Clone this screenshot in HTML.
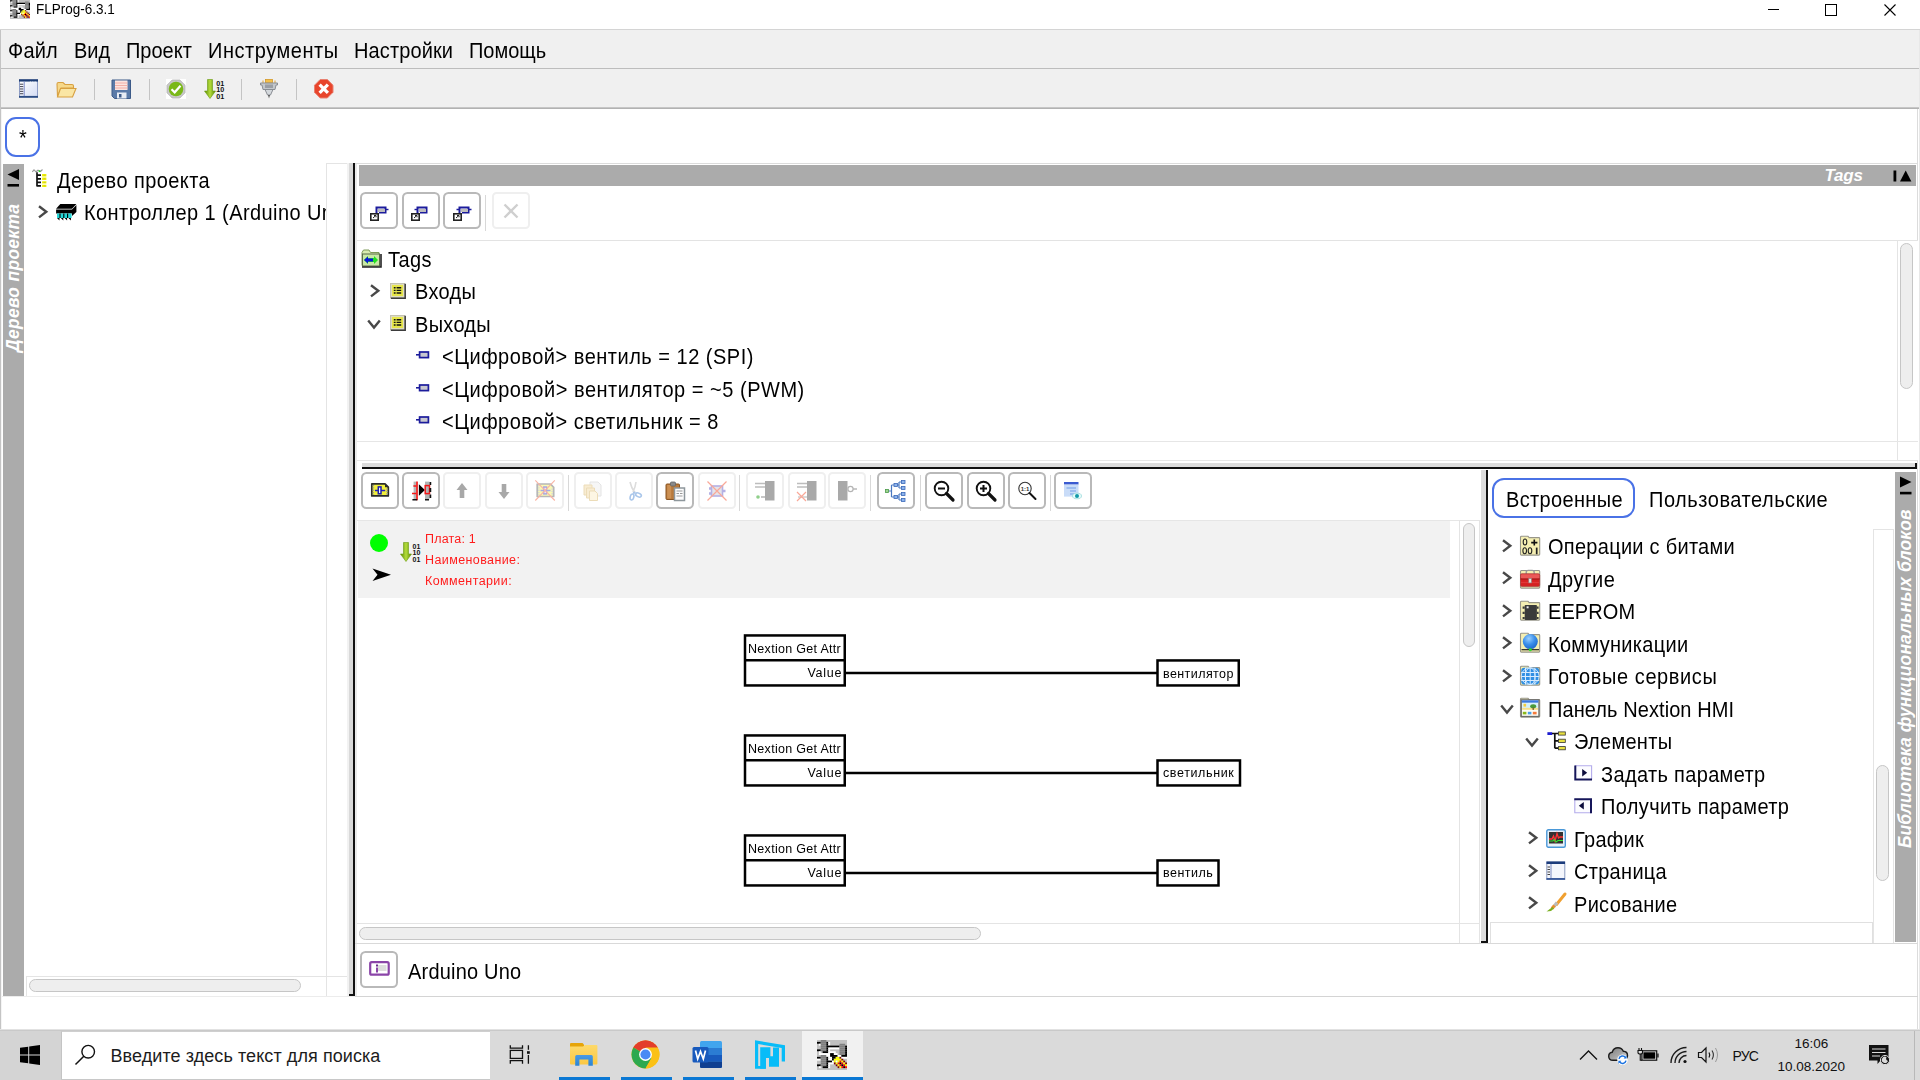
<!DOCTYPE html>
<html><head><meta charset="utf-8"><title>FLProg-6.3.1</title>
<style>
*{box-sizing:border-box;margin:0;padding:0}
html,body{width:1920px;height:1080px;overflow:hidden;background:#fff}
body{font-family:"Liberation Sans",sans-serif;color:#000;position:relative}
.a{position:absolute}
.t{position:absolute;white-space:pre;line-height:1}
.t20{font-size:21.8px;transform-origin:0 0;transform:scaleX(.9174)}
.hl{position:absolute;height:1px}
.vl{position:absolute;width:1px}
.btn{position:absolute;width:38px;height:37px;border:2px solid #b9b9b9;border-radius:5.500px;background:#fff}
.btn.dis{border-color:#efefef;border-radius:4.500px}
.sep{position:absolute;width:1px;height:36px;background:#d8d8d8}
.thumb{position:absolute;background:#eeeeee;border:1px solid #c6c6c6;border-radius:7px}
.chev{position:absolute;width:12px;height:14px}
svg{position:absolute;overflow:visible}
</style></head><body>

<!-- ============ TITLE BAR ============ -->
<div class="a" id="titlebar" style="left:0;top:0;width:1920px;height:30px;background:#fff"></div>
<div class="t" style="left:35.500px;top:2.400px;font-size:14.500px;transform-origin:0 0;transform:scaleX(.932)">FLProg-6.3.1</div>
<svg style="left:10px;top:-1.500px;filter:blur(.35px)" width="20" height="20" viewBox="0 0 16 16"><rect width="16" height="16" fill="#c0c0c0"/><rect x="2" y="0" width="3" height="1" fill="#808080"/><rect x="0" y="1" width="2" height="1" fill="#000"/><rect x="2" y="1" width="3" height="1" fill="#808080"/><rect x="5" y="1" width="1" height="1" fill="#000"/><rect x="6" y="1" width="1" height="1" fill="#fff"/><rect x="1" y="2" width="1" height="1" fill="#fff"/><rect x="2" y="2" width="3" height="1" fill="#808080"/><rect x="5" y="2" width="1" height="1" fill="#000"/><rect x="6" y="2" width="1" height="1" fill="#fff"/><rect x="12" y="2" width="3" height="1" fill="#808080"/><rect x="2" y="3" width="3" height="1" fill="#808080"/><rect x="5" y="3" width="7" height="1" fill="#000"/><rect x="12" y="3" width="3" height="1" fill="#808080"/><rect x="15" y="3" width="1" height="1" fill="#000"/><rect x="2" y="4" width="3" height="1" fill="#808080"/><rect x="5" y="4" width="1" height="1" fill="#000"/><rect x="6" y="4" width="6" height="1" fill="#fff"/><rect x="12" y="4" width="3" height="1" fill="#808080"/><rect x="15" y="4" width="1" height="1" fill="#000"/><rect x="0" y="5" width="2" height="1" fill="#000"/><rect x="2" y="5" width="3" height="1" fill="#808080"/><rect x="5" y="5" width="1" height="1" fill="#000"/><rect x="6" y="5" width="1" height="1" fill="#fff"/><rect x="12" y="5" width="3" height="1" fill="#808080"/><rect x="15" y="5" width="1" height="1" fill="#000"/><rect x="1" y="6" width="1" height="1" fill="#fff"/><rect x="3" y="6" width="3" height="1" fill="#000"/><rect x="6" y="6" width="4" height="1" fill="#fff"/><rect x="12" y="6" width="3" height="1" fill="#808080"/><rect x="15" y="6" width="1" height="1" fill="#000"/><rect x="1" y="7" width="6" height="1" fill="#fff"/><rect x="7" y="7" width="2" height="1" fill="#000"/><rect x="9" y="7" width="2" height="1" fill="#fff"/><rect x="12" y="7" width="3" height="1" fill="#808080"/><rect x="15" y="7" width="1" height="1" fill="#000"/><rect x="2" y="8" width="3" height="1" fill="#808080"/><rect x="5" y="8" width="2" height="1" fill="#fff"/><rect x="7" y="8" width="4" height="1" fill="#000"/><rect x="11" y="8" width="2" height="1" fill="#fff"/><rect x="13" y="8" width="3" height="1" fill="#000"/><rect x="0" y="9" width="2" height="1" fill="#000"/><rect x="2" y="9" width="3" height="1" fill="#808080"/><rect x="5" y="9" width="1" height="1" fill="#000"/><rect x="6" y="9" width="2" height="1" fill="#fff"/><rect x="8" y="9" width="2" height="1" fill="#000"/><rect x="10" y="9" width="2" height="1" fill="#ff0"/><rect x="12" y="9" width="1" height="1" fill="#800000"/><rect x="13" y="9" width="3" height="1" fill="#fff"/><rect x="0" y="10" width="2" height="1" fill="#fff"/><rect x="2" y="10" width="3" height="1" fill="#808080"/><rect x="5" y="10" width="1" height="1" fill="#000"/><rect x="6" y="10" width="2" height="1" fill="#fff"/><rect x="8" y="10" width="1" height="1" fill="#000"/><rect x="9" y="10" width="4" height="1" fill="#ff0"/><rect x="13" y="10" width="1" height="1" fill="#800000"/><rect x="2" y="11" width="3" height="1" fill="#808080"/><rect x="5" y="11" width="3" height="1" fill="#000"/><rect x="8" y="11" width="1" height="1" fill="#fff"/><rect x="9" y="11" width="1" height="1" fill="#ff0"/><rect x="10" y="11" width="1" height="1" fill="#fff"/><rect x="11" y="11" width="1" height="1" fill="#ff0"/><rect x="12" y="11" width="1" height="1" fill="#f00"/><rect x="13" y="11" width="1" height="1" fill="#ff0"/><rect x="14" y="11" width="1" height="1" fill="#800000"/><rect x="2" y="12" width="3" height="1" fill="#808080"/><rect x="5" y="12" width="1" height="1" fill="#000"/><rect x="6" y="12" width="3" height="1" fill="#fff"/><rect x="9" y="12" width="1" height="1" fill="#800000"/><rect x="10" y="12" width="1" height="1" fill="#ff0"/><rect x="11" y="12" width="1" height="1" fill="#f00"/><rect x="12" y="12" width="1" height="1" fill="#000"/><rect x="13" y="12" width="1" height="1" fill="#f00"/><rect x="14" y="12" width="1" height="1" fill="#ff0"/><rect x="15" y="12" width="1" height="1" fill="#800000"/><rect x="0" y="13" width="2" height="1" fill="#000"/><rect x="2" y="13" width="3" height="1" fill="#808080"/><rect x="5" y="13" width="1" height="1" fill="#000"/><rect x="6" y="13" width="1" height="1" fill="#fff"/><rect x="10" y="13" width="1" height="1" fill="#800000"/><rect x="11" y="13" width="1" height="1" fill="#ff0"/><rect x="12" y="13" width="1" height="1" fill="#f00"/><rect x="13" y="13" width="1" height="1" fill="#000"/><rect x="14" y="13" width="1" height="1" fill="#f00"/><rect x="15" y="13" width="1" height="1" fill="#ff0"/><rect x="1" y="14" width="1" height="1" fill="#fff"/><rect x="3" y="14" width="3" height="1" fill="#000"/><rect x="6" y="14" width="1" height="1" fill="#fff"/><rect x="11" y="14" width="1" height="1" fill="#800000"/><rect x="12" y="14" width="1" height="1" fill="#ff0"/><rect x="13" y="14" width="1" height="1" fill="#f00"/><rect x="14" y="14" width="1" height="1" fill="#000"/><rect x="15" y="14" width="1" height="1" fill="#f00"/></svg>
<!-- window controls -->
<svg style="left:1760px;top:0" width="160" height="30" viewBox="0 0 160 30">
 <path d="M8 9.5H19" stroke="#000" stroke-width="1" fill="none"/>
 <rect x="65.5" y="4.5" width="11" height="11" stroke="#000" stroke-width="1" fill="none"/>
 <path d="M124.5 4.5L135.5 15.5M135.5 4.5L124.5 15.5" stroke="#000" stroke-width="1.1" fill="none"/>
</svg>

<!-- ============ MENU BAR ============ -->
<div class="a" style="left:0;top:29px;width:1920px;height:80px;background:#f0f0f0"></div>
<div class="hl" style="left:0;top:29px;width:1920px;background:#d4d4d4"></div>
<div class="hl" style="left:0;top:68px;width:1920px;background:#bdbdbd"></div>
<div class="hl" style="left:0;top:107px;width:1920px;background:#c6c6c6"></div>
<div class="hl" style="left:0;top:108px;width:1920px;background:#b2b2b2"></div>
<div class="t t20" style="left:8px;top:39.55px;letter-spacing:0.218px">Файл</div>
<div class="t t20" style="left:74px;top:39.55px">Вид</div>
<div class="t t20" style="left:126px;top:39.55px">Проект</div>
<div class="t t20" style="left:207.5px;top:39.55px;letter-spacing:0.599px">Инструменты</div>
<div class="t t20" style="left:354px;top:39.55px;letter-spacing:0.131px">Настройки</div>
<div class="t t20" style="left:469px;top:39.55px">Помощь</div>

<!-- ============ TOOLBAR ============ -->
<div id="toolbar">
<svg style="left:18.700px;top:79px" width="19" height="19" viewBox="0 0 20 20"><defs><linearGradient id="gp" x1="0" y1="0" x2="1" y2="1"><stop offset="0" stop-color="#fff"/><stop offset="1" stop-color="#d4dcf4"/></linearGradient></defs><rect x="0.500" y="1" width="19" height="18" fill="url(#gp)" stroke="#8a9ac4" stroke-width="1"/><rect x="0" y="0.300" width="20" height="2.400" fill="#1c3c74"/><rect x="0" y="17.800" width="20" height="1.900" fill="#2c4c84"/><path d="M5.500 2.500V18" stroke="#7a88c8" stroke-width="1"/><path d="M1 5.500H4.500M1 8H4.500M1 10.500H4.500M1 13H4.500M1 15.500H4.500" stroke="#3a3a4a" stroke-width="1"/><path d="M12 2.700V3.700M14.500 2.700V3.700M17 2.700V3.700" stroke="#fff" stroke-width="1"/></svg><svg style="left:56px;top:80px" width="21" height="19" viewBox="0 0 21 19"><path d="M1 4Q1 2.500 2.500 2.500H7L9 4.500H16Q17.500 4.500 17.500 6V8H5L1.500 16.500Z" fill="#f6d88a" stroke="#d8a040" stroke-width="1.100"/><path d="M1.500 17L4.500 8.500H20L16.500 17Z" fill="#fae6a4" stroke="#d8a040" stroke-width="1.100"/></svg><div class="sep" style="left:94px;top:79px;height:21px;background:#c4c4c4"></div><svg style="left:111px;top:78.5px" width="20" height="20" viewBox="0 0 20 20"><path d="M1 1H19.500V19.500H3.500L1 17Z" fill="#5a7aa8" stroke="#3c5a88" stroke-width="1"/><rect x="4" y="1.500" width="12.500" height="9.500" fill="#fbe4e0"/><path d="M4 4H16.500M4 6.500H16.500M4 9H16.500" stroke="#f0a8a0" stroke-width=".9"/><rect x="6" y="13.500" width="9.500" height="6" fill="#e8ecf4"/><rect x="8" y="15" width="2.500" height="3.500" fill="#3c5a88"/></svg><div class="sep" style="left:149px;top:79px;height:21px;background:#c4c4c4"></div><svg style="left:166px;top:78.5px" width="20" height="20" viewBox="0 0 20 20"><rect x="0" y="0" width="20" height="20" fill="#fff"/><path d="M6.200 1H13.800L19 6.200V13.800L13.800 19H6.200L1 13.800V6.200Z" fill="#c8c8c8" stroke="#b0b0b0" stroke-width=".8"/><circle cx="10" cy="10" r="7.300" fill="#7ab818"/><path d="M5.500 10.200L8.700 13.300L14.500 6.800" fill="none" stroke="#fff" stroke-width="2.200"/></svg><svg style="left:203.5px;top:78.5px" width="21" height="20" viewBox="0 0 21 20"><defs><linearGradient id="gb" x1="0" x2="1" y1="0" y2="0"><stop offset="0" stop-color="#5a8a00"/><stop offset=".5" stop-color="#b4dc3c"/><stop offset="1" stop-color="#5a8a00"/></linearGradient></defs><path d="M3.500 0.500H8.500V12H11.500L6 19.500L0.500 12H3.500Z" fill="url(#gb)" stroke="#6a9a10" stroke-width=".6"/><text x="12.300" y="6.500" font-size="7.200" font-weight="bold" fill="#111" font-family="Liberation Sans">01</text><text x="12.300" y="13" font-size="7.200" font-weight="bold" fill="#111" font-family="Liberation Sans">10</text><text x="12.300" y="19.500" font-size="7.200" font-weight="bold" fill="#111" font-family="Liberation Sans">01</text></svg><div class="sep" style="left:241px;top:79px;height:21px;background:#c4c4c4"></div><svg style="left:259.5px;top:78.5px" width="18" height="20" viewBox="0 0 18 20"><rect x="5.500" y="0.500" width="7" height="3.500" fill="#f4c04a" stroke="#d49a2a" stroke-width=".8"/><path d="M3 1.500V4M15 1.500V4" stroke="#e0a030" stroke-width="1"/><path d="M0.500 4H17.500V6H16L15 10.500H3L2 6H0.500Z" fill="#c4c8cc" stroke="#8a8e94" stroke-width="1"/><rect x="5" y="5.500" width="8" height="3.500" fill="#9a9ea4"/><path d="M5 10.500L7.500 16H10.500L13 10.500Z" fill="#d4d8dc" stroke="#8a8e94" stroke-width="1"/><path d="M8 16H10L9 19.500Z" fill="#555"/></svg><div class="sep" style="left:296px;top:79px;height:21px;background:#c4c4c4"></div><svg style="left:313.5px;top:78.5px" width="20" height="20" viewBox="0 0 20 20"><path d="M6.200 0.500H13.300L19 6.200V13.300L13.300 19H6.200L0.500 13.300V6.200Z" fill="#e8452c" stroke="#e88070" stroke-width="1"/><path d="M5.600 5.600L13.900 13.900M13.900 5.600L5.600 13.900" stroke="#fff" stroke-width="3.200"/></svg>
</div>

<!-- ============ DOC TAB ============ -->
<div class="a" style="left:5px;top:117px;width:35px;height:40px;border:2px solid #4a72e6;border-radius:11px"></div>
<div class="t t20" style="left:18.700px;top:126.550px">*</div>

<!-- window side borders -->
<div class="vl" style="left:0;top:30px;height:1000px;background:#c4c4c4"></div>
<div class="vl" style="left:1px;top:109px;height:921px;background:#f4f4f4"></div>
<div class="vl" style="left:1917px;top:109px;height:921px;background:#dcdcdc"></div>
<div class="vl" style="left:1919px;top:30px;height:1000px;background:#e8e8e8"></div>

<!-- ============ LEFT PANEL ============ -->
<div id="leftpanel">
<div class="a" style="left:3px;top:164px;width:21px;height:832px;background:#ababab"></div>
<svg style="left:3px;top:164px" width="21" height="30" viewBox="0 0 21 30"><path d="M16 5V16L4.5 10.5Z" fill="#000"/><rect x="4.5" y="20" width="11.5" height="2.6" fill="#000"/></svg>
<div class="t" style="left:4px;top:352px;width:148px;height:19px;font-size:17.5px;line-height:19px;font-weight:bold;font-style:italic;color:#fff;transform-origin:0 0;transform:rotate(-90deg);letter-spacing:.28px">Дерево проекта</div>
<svg style="left:32px;top:169px" width="16" height="20" viewBox="0 0 16 20"><path d="M0.300 2.800L2 0.800L4 2.800L6 1.200L8.500 2.500L10.500 0.500" stroke="#9a9a9a" stroke-width="1.100" fill="none"/><rect x="6.700" y="1.400" width="1.600" height="1.600" fill="#22dd22"/><path d="M5 3.300V17.600M5 6.200H9M5 9.800H9M5 13.400H9M5 16.900H9" stroke="#111" stroke-width="1.700" fill="none"/><path d="M10.100 6.200H14.400M10.100 9.800H14.400M10.100 13.400H14.400M10.100 16.900H14.400" stroke="#f4f400" stroke-width="2.400"/><path d="M11.500 6.200H13.500M11.500 9.800H13.500M11.500 13.400H13.500M11.500 16.900H13.500" stroke="#c8c820" stroke-width="1"/></svg>
<svg style="left:56px;top:204px" width="21" height="18" viewBox="0 0 21 18"><path d="M4.300 0.100H20.400L16 4.700H0.100Z" fill="#000"/><path d="M0.100 5.600H16L20.400 1V8L16 12V9.500H0.100Z" fill="#000"/><path d="M1 9.500H15.600V14H1Z" fill="#22d8d8"/><path d="M4 9.500V14M7.800 9.500V14M11.600 9.500V14" stroke="#000" stroke-width="1.100"/><path d="M1 14L3.500 16.500V14ZM4.800 14L7.300 16.500V14ZM8.600 14L11.100 16.500V14ZM12.400 14L14.900 16.500V14Z" fill="#000"/></svg>
<!-- tree -->
<div class="a" style="left:24px;top:164px;width:302px;height:812px;overflow:hidden">
 <div class="t t20" style="left:33px;top:5.55px;letter-spacing:0.458px">Дерево проекта</div>
 <div class="t t20" style="left:60px;top:37.55px;letter-spacing:0.458px">Контроллер 1 (Arduino Uno)</div>
</div>
<svg class="chev" style="left:37px;top:205px" viewBox="0 0 12 14"><path d="M2 1.2L9.3 6.8L2 12.4" fill="none" stroke="#484848" stroke-width="2.4"/></svg>
<!-- scrollbars -->
<div class="a" style="left:326px;top:163px;width:22px;height:814px;border:1px solid #e4e4e4;background:#fff"></div>
<div class="a" style="left:26px;top:976px;width:322px;height:21px;border:1px solid #e4e4e4;background:#fff"></div>
<div class="vl" style="left:326px;top:976px;height:20px;background:#e4e4e4"></div>
<div class="thumb" style="left:29px;top:979px;width:272px;height:13px"></div>
<!-- splitter -->
<div class="a" style="left:347px;top:163px;width:2px;height:833px;background:#f2f2f2"></div>
<div class="a" style="left:349px;top:163px;width:4.500px;height:833px;background:#d9d9d9"></div>
<div class="a" style="left:353.400px;top:163px;width:1.900px;height:833px;background:#111"></div>
<div class="a" style="left:355.300px;top:164px;width:1.700px;height:832px;background:#ebebeb"></div>
<div class="a" style="left:349px;top:994px;width:6px;height:2px;background:#111"></div>
</div>

<!-- ============ TAGS PANEL ============ -->
<div id="tagspanel">
<div class="hl" style="left:355px;top:163px;width:1563px;background:#dcdcdc"></div>
<div class="a" style="left:359px;top:165px;width:1557px;height:21px;background:#ababab"></div>
<div class="t" style="left:1824.5px;top:166.5px;font-size:17px;font-weight:bold;font-style:italic;color:#fff;letter-spacing:-.2px">Tags</div>
<svg style="left:1890px;top:165px" width="26" height="21" viewBox="0 0 26 21"><rect x="3.5" y="5.5" width="2.8" height="11" fill="#000"/><path d="M10 16.5L15.7 5.5L21.4 16.5Z" fill="#000"/></svg>
<div class="btn" style="left:360px;top:192px"></div><svg style="left:369.5px;top:204.700px" width="20" height="16" viewBox="0 0 20 16"><path d="M6.5 9V2.5H15.5V7.5H9" fill="none" stroke="#1c1c9c" stroke-width="2"/><rect x="8" y="4" width="7" height="3" fill="#bdbdbd"/><path d="M15.5 4.5H18.5" stroke="#1c1c9c" stroke-width="1.4" fill="none"/><rect x="0.8" y="8.8" width="7.4" height="6.4" fill="#fff" stroke="#222" stroke-width="1.6"/><path d="M3 13L5.5 10.8M4 10.5H6V12.3" stroke="#222" stroke-width="1" fill="none"/></svg><div class="btn" style="left:401.5px;top:192px"></div><svg style="left:411.0px;top:204.700px" width="20" height="16" viewBox="0 0 20 16"><path d="M6.5 9V2.5H15.5V7.5H9" fill="none" stroke="#1c1c9c" stroke-width="2"/><rect x="8" y="4" width="7" height="3" fill="#bdbdbd"/><path d="M3.5 4.5H6.5" stroke="#1c1c9c" stroke-width="1.4" fill="none"/><rect x="0.8" y="8.8" width="7.4" height="6.4" fill="#fff" stroke="#222" stroke-width="1.6"/><path d="M3 13L5.5 10.8M4 10.5H6V12.3" stroke="#222" stroke-width="1" fill="none"/></svg><div class="btn" style="left:443px;top:192px"></div><svg style="left:452.5px;top:204.700px" width="20" height="16" viewBox="0 0 20 16"><path d="M6.5 9V2.5H15.5V7.5H9" fill="none" stroke="#1c1c9c" stroke-width="2"/><rect x="8" y="4" width="7" height="3" fill="#bdbdbd"/><path d="M3.5 4.5H6.5M15.5 4.5H18.5" stroke="#1c1c9c" stroke-width="1.4" fill="none"/><rect x="0.8" y="8.8" width="7.4" height="6.4" fill="#fff" stroke="#222" stroke-width="1.6"/><path d="M3 13L5.5 10.8M4 10.5H6V12.3" stroke="#222" stroke-width="1" fill="none"/></svg>
<div class="sep" style="left:485px;top:195px"></div>
<div class="btn dis" style="left:492px;top:192px"></div>
<svg style="left:503px;top:203px" width="16" height="16" viewBox="0 0 16 16"><path d="M1.5 1.5L14.5 14.5M14.5 1.5L1.5 14.5" stroke="#cfcfcf" stroke-width="2.4"/></svg>
<div class="hl" style="left:357px;top:240px;width:1561px;background:#e3e3e3"></div>
<!-- tree -->
<svg style="left:361px;top:249px" width="21" height="19" viewBox="0 0 21 19"><path d="M1 3.5L2.5 1H8L9.5 3.5H18V16.5H1Z" fill="#d9ecb0" stroke="#7f9a5a" stroke-width="1"/><rect x="1.5" y="5" width="17" height="12" fill="#c9e8a6" stroke="#5a6a48" stroke-width="1"/><path d="M1 18H20V5" stroke="#222" stroke-width="1.6" fill="none"/><path d="M3 11L7 7V9H13V7L17 11L13 15V13H7V15Z" fill="#22e022"/><path d="M3 11L7 7.5V9.5H12V12.5H7V14.5Z" fill="#0a14d8"/></svg>
<div class="t t20" style="left:388px;top:248.55px;letter-spacing:0.436px">Tags</div>
<svg class="chev" style="left:369px;top:284px" viewBox="0 0 12 14"><path d="M2 1.2L9.3 6.8L2 12.4" fill="none" stroke="#484848" stroke-width="2.4"/></svg><svg style="left:389.500px;top:283.4px" width="16" height="16" viewBox="0 0 16 16"><rect x="0.500" y="0.500" width="14" height="14" fill="#dedcc0" stroke="#c4c2b0" stroke-width="1"/><rect x="2" y="2" width="11" height="11" fill="#e6e64a"/><path d="M0.800 15.200H15.200V0.800" stroke="#3c3c3c" stroke-width="1.500" fill="none"/><path d="M3.800 4.800H5.600M6.600 4.800H11.200M3.800 7.400H5.600M6.600 7.400H11.200M3.800 10H5.600M6.600 10H11.200" stroke="#111" stroke-width="1.400"/></svg>
<div class="t t20" style="left:415px;top:280.55px;letter-spacing:0.327px">Входы</div>
<svg class="chev" style="left:367px;top:318px;width:14px;height:12px" viewBox="0 0 14 12"><path d="M1.2 2.5L7 9.5L12.8 2.5" fill="none" stroke="#484848" stroke-width="2.4"/></svg><svg style="left:389.500px;top:315.4px" width="16" height="16" viewBox="0 0 16 16"><rect x="0.500" y="0.500" width="14" height="14" fill="#dedcc0" stroke="#c4c2b0" stroke-width="1"/><rect x="2" y="2" width="11" height="11" fill="#e6e64a"/><path d="M0.800 15.200H15.200V0.800" stroke="#3c3c3c" stroke-width="1.500" fill="none"/><path d="M3.800 4.800H5.600M6.600 4.800H11.200M3.800 7.400H5.600M6.600 7.400H11.200M3.800 10H5.600M6.600 10H11.200" stroke="#111" stroke-width="1.400"/></svg>
<div class="t t20" style="left:415px;top:313.55px;letter-spacing:0.327px">Выходы</div>
<svg style="left:416px;top:351.2px" width="14" height="8" viewBox="0 0 14 8"><path d="M0 3.8H3" stroke="#1c1c9c" stroke-width="1.6"/><rect x="3.6" y="1" width="8.8" height="5.6" fill="#c8c8d0" stroke="#1c1c9c" stroke-width="1.700"/></svg>
<div class="t t20" style="left:442px;top:345.55px;letter-spacing:0.545px">&lt;Цифровой&gt; вентиль = 12 (SPI)</div>
<svg style="left:416px;top:383.7px" width="14" height="8" viewBox="0 0 14 8"><path d="M0 3.8H3" stroke="#1c1c9c" stroke-width="1.6"/><rect x="3.6" y="1" width="8.8" height="5.6" fill="#c8c8d0" stroke="#1c1c9c" stroke-width="1.700"/></svg>
<div class="t t20" style="left:442px;top:378.55px;letter-spacing:0.567px">&lt;Цифровой&gt; вентилятор = ~5 (PWM)</div>
<svg style="left:416px;top:416.2px" width="14" height="8" viewBox="0 0 14 8"><path d="M0 3.8H3" stroke="#1c1c9c" stroke-width="1.6"/><rect x="3.6" y="1" width="8.8" height="5.6" fill="#c8c8d0" stroke="#1c1c9c" stroke-width="1.700"/></svg>
<div class="t t20" style="left:442px;top:410.55px;letter-spacing:0.545px">&lt;Цифровой&gt; светильник = 8</div>
<!-- scrollbars -->
<div class="a" style="left:1897px;top:240px;width:21px;height:221px;border:1px solid #e4e4e4;border-right:none;background:#fff"></div>
<div class="thumb" style="left:1900px;top:243px;width:13px;height:146px"></div>
<div class="hl" style="left:357px;top:441px;width:1561px;background:#e6e6e6"></div>
<div class="hl" style="left:357px;top:460px;width:1541px;background:#e6e6e6"></div>
<!-- h splitter -->
<div class="a" style="left:362px;top:463px;width:1555px;height:4px;background:#dcdcdc"></div>
<div class="a" style="left:362px;top:467px;width:1555px;height:2px;background:#111"></div>
<div class="a" style="left:1915px;top:463px;width:2px;height:6px;background:#111"></div>
</div>

<!-- ============ CANVAS ============ -->
<div id="canvas">
<div class="btn" style="left:360.5px;top:472px"></div><svg style="left:360px;top:472px" width="38" height="37" viewBox="360 472 38 37"><path d="M371.800 483.800H385L388.300 487.200V495.900H371.800Z" fill="#f2f03a" stroke="#2c2c2c" stroke-width="1.700" stroke-linejoin="round"/><path d="M385 483.800V487.200H388.300Z" fill="#2c2c2c"/><path d="M373.400 485V495M387 488.500V495" stroke="#9a9a9a" stroke-width="1.500" stroke-dasharray="1.300 1"/><path d="M375 490.500H385.200" stroke="#2222bb" stroke-width="1.500"/><rect x="378.300" y="486.900" width="2.700" height="6.900" fill="#fff" stroke="#1c1cb0" stroke-width="1.500"/></svg>
<div class="btn" style="left:401.5px;top:472px"></div><svg style="left:401px;top:472px" width="38" height="37" viewBox="401 472 38 37"><rect x="413.600" y="481.600" width="2.600" height="17.500" fill="#b4b8b8"/><rect x="425" y="481.600" width="4.500" height="17.500" fill="#b0b4b4"/><path d="M417 481.400V500.200" stroke="#f01818" stroke-width="1.700"/><path d="M413.400 486H416.500M412 493.500H416.500" stroke="#f01818" stroke-width="1.500"/><path d="M412.400 499.800H417.200M425 499.800H429" stroke="#111" stroke-width="1.600"/><path d="M418.900 484.200V495.700L424.900 490Z" fill="#000"/><rect x="425.200" y="485.600" width="4.300" height="8" fill="none" stroke="#f01818" stroke-width="1.500"/><path d="M430.400 482V485M430.400 488V492M430.400 494.500V498" stroke="#111" stroke-width="1.700"/></svg>
<div class="btn dis" style="left:443px;top:472px"></div><svg style="left:450px;top:478.5px" width="24" height="24" viewBox="0 0 24 24"><path d="M12 4L17.5 11H14.3V19H9.7V11H6.500Z" fill="#a8a8a8"/></svg>
<div class="btn dis" style="left:484.5px;top:472px"></div><svg style="left:491.5px;top:478.5px" width="24" height="24" viewBox="0 0 24 24"><path d="M12 20L17.5 13H14.3V5H9.7V13H6.500Z" fill="#a8a8a8"/></svg>
<div class="btn dis" style="left:525.5px;top:472px"></div><svg style="left:525px;top:472px" width="38" height="37" viewBox="525 472 38 37"><g opacity=".38"><path d="M537.200 484H550.500L553.700 487.300V496.500H537.200Z" fill="#f2f03a" stroke="#444" stroke-width="1.700" stroke-linejoin="round"/><path d="M538.800 485V495.500M552.200 488.500V495.500" stroke="#999" stroke-width="1.600" stroke-dasharray="1.300 1"/><path d="M540.500 490.500H550.500" stroke="#2222bb" stroke-width="1.500"/><rect x="543.800" y="487" width="2.700" height="6.900" fill="#fff" stroke="#1c1cb0" stroke-width="1.500"/></g><path d="M535.300 480.300L554.800 500.500M554.800 480.300L535.300 500.500" stroke="#f9b4a4" stroke-width="1.100"/></svg>
<div class="btn dis" style="left:573.75px;top:472px"></div><svg style="left:580.75px;top:478.5px" width="24" height="24" viewBox="0 0 24 24"><path d="M9 3H17L20 6V17H9Z" fill="#f6f6f6" stroke="#e4e4e4"/><path d="M3 6H11V16H3Z" fill="#f8ecd2" stroke="#ecdcb8"/><path d="M5.500 9H13.500V19H5.500Z" fill="#f8ecd2" stroke="#ecdcb8"/><path d="M8.500 12H14L16.500 14.500V21.500H8.500Z" fill="#fdf6e4" stroke="#ecdcb8"/></svg>
<div class="btn dis" style="left:615px;top:472px"></div><svg style="left:622px;top:478.5px" width="24" height="24" viewBox="0 0 24 24"><path d="M8 3C9 8 11 11 13 14M14 3C13.500 7 12.500 10 11 13" stroke="#dcdcdc" stroke-width="1.6" fill="none"/><ellipse cx="10" cy="18" rx="1.800" ry="3" fill="none" stroke="#a9c6ea" stroke-width="1.6" transform="rotate(15 10 18)"/><ellipse cx="16.500" cy="16" rx="3" ry="1.800" fill="none" stroke="#a9c6ea" stroke-width="1.6" transform="rotate(25 16.5 16)"/><path d="M11 14L13.500 13.500" stroke="#a9c6ea" stroke-width="2"/></svg>
<div class="btn" style="left:655.6px;top:472px"></div><svg style="left:662.6px;top:478.5px" width="24" height="24" viewBox="0 0 24 24"><rect x="3" y="5" width="13.500" height="15.500" rx="1" fill="#b87a3c" stroke="#8a5522" stroke-width="1"/><rect x="4.200" y="6" width="4" height="13.500" fill="#d49a5c" opacity=".7"/><rect x="7.500" y="3" width="5" height="4" rx="1" fill="#8a8a8a" stroke="#666" stroke-width=".8"/><rect x="11.500" y="9" width="10" height="12.500" fill="#fcfcfc" stroke="#8e979c" stroke-width="1.5"/><path d="M13.500 12H19.500M13.500 14.500H16M17 14.500H19.500M13.500 17H19.500" stroke="#999" stroke-width="1.2"/></svg>
<div class="btn dis" style="left:697.5px;top:472px"></div><svg style="left:704.5px;top:478.5px" width="24" height="24" viewBox="0 0 24 24"><rect x="6.500" y="7" width="11" height="10" fill="#e4e4ea" stroke="#b4b0e4" stroke-width="1.6"/><path d="M4 9.500H6.500M4 14.500H6.500M17.500 12H20.500" stroke="#b4b0e4" stroke-width="2.4"/><path d="M2.500 2.500L21.500 21.500M21.500 2.500L2.500 21.500" stroke="#f9a898" stroke-width="1.2"/></svg>
<div class="btn dis" style="left:745.6px;top:472px"></div><svg style="left:752.6px;top:478.5px" width="24" height="24" viewBox="0 0 24 24"><rect x="12" y="2" width="9.500" height="19.500" fill="#a9a9a9"/><path d="M2 4.500H12M2 8H12" stroke="#bdbdbd" stroke-width="1.7"/><path d="M8 18H12" stroke="#bdbdbd" stroke-width="1.7"/><circle cx="5" cy="18" r="1.8" fill="#8fcf8a"/></svg>
<div class="btn dis" style="left:787.5px;top:472px"></div><svg style="left:794.5px;top:478.5px" width="24" height="24" viewBox="0 0 24 24"><rect x="12" y="2" width="9.500" height="19.500" fill="#a9a9a9"/><path d="M2 4.500H12M2 8H12" stroke="#bdbdbd" stroke-width="1.7"/><path d="M3 18H12" stroke="#d4d4d4" stroke-width="1.7"/><path d="M2 13L11 22M11 13L2 22" stroke="#f9a898" stroke-width="1.2"/></svg>
<div class="btn dis" style="left:828.3px;top:472px"></div><svg style="left:835.3px;top:478.5px" width="24" height="24" viewBox="0 0 24 24"><rect x="3" y="2" width="9.500" height="19.500" fill="#a9a9a9"/><circle cx="15.500" cy="10" r="2.600" fill="#fff" stroke="#b4b4b4" stroke-width="1.2"/><path d="M18 10H22" stroke="#b4b4b4" stroke-width="1.4"/></svg>
<div class="btn" style="left:877px;top:472px"></div><svg style="left:884px;top:478.5px" width="24" height="24" viewBox="0 0 24 24"><path d="M4.500 12H7.500M7.500 6V18M7.500 6H10M7.500 18H10M13.500 6H15M13.500 18H15M15 3V9M15 15V21M15 3H17.500M15 9H17.500M15 15H17.500M15 21H17.500" stroke="#4a78c0" stroke-width="1.2" fill="none"/><rect x="1.500" y="10.500" width="3" height="3" fill="#9fd48f" stroke="#4a9a4a" stroke-width=".8"/><rect x="10" y="4.500" width="3.500" height="3" fill="#8db4ec" stroke="#3a68b8" stroke-width=".8"/><rect x="10" y="16.500" width="3.500" height="3" fill="#8db4ec" stroke="#3a68b8" stroke-width=".8"/><rect x="17.500" y="1.500" width="3.500" height="3" fill="#8db4ec" stroke="#3a68b8" stroke-width=".8"/><rect x="17.500" y="7.500" width="3.500" height="3" fill="#8db4ec" stroke="#3a68b8" stroke-width=".8"/><rect x="17.500" y="13.500" width="3.500" height="3" fill="#8db4ec" stroke="#3a68b8" stroke-width=".8"/><rect x="17.500" y="19.500" width="3.500" height="3" fill="#8db4ec" stroke="#3a68b8" stroke-width=".8"/></svg>
<div class="btn" style="left:925.3px;top:472px"></div><svg style="left:932.3px;top:478.5px" width="24" height="24" viewBox="0 0 24 24"><circle cx="9.500" cy="9.500" r="6.800" fill="#fff" stroke="#111" stroke-width="1.9"/><path d="M14.500 14.500L21 21" stroke="#111" stroke-width="3.200" stroke-linecap="round"/><path d="M6 9.500H13" stroke="#111" stroke-width="2"/></svg>
<div class="btn" style="left:966.7px;top:472px"></div><svg style="left:973.7px;top:478.5px" width="24" height="24" viewBox="0 0 24 24"><circle cx="9.500" cy="9.500" r="6.800" fill="#fff" stroke="#111" stroke-width="1.9"/><path d="M14.500 14.500L21 21" stroke="#111" stroke-width="3.200" stroke-linecap="round"/><path d="M6 9.500H13M9.500 6V13" stroke="#111" stroke-width="2"/></svg>
<div class="btn" style="left:1008px;top:472px"></div><svg style="left:1015px;top:478.5px" width="24" height="24" viewBox="0 0 24 24"><circle cx="10" cy="9.500" r="6.200" fill="#fff" stroke="#333" stroke-width="1.100"/><path d="M14.500 14L20.500 20" stroke="#111" stroke-width="2" stroke-linecap="round"/><text x="10" y="12" font-size="6" font-weight="bold" text-anchor="middle" font-family="Liberation Sans" fill="#333">1:1</text></svg>
<div class="btn" style="left:1054px;top:472px"></div><svg style="left:1061px;top:478.5px" width="24" height="24" viewBox="0 0 24 24"><rect x="3" y="3" width="14.500" height="2.600" fill="#3a5ad0"/><rect x="3" y="5.600" width="14.500" height="12" fill="#c9dcf8"/><path d="M5.500 9H15M9 12H15M9 15H13" stroke="#8fb2ec" stroke-width="1.7"/><ellipse cx="16" cy="17" rx="4.500" ry="2.800" fill="#e8fbfb" stroke="#9adada" stroke-width=".8"/><circle cx="16" cy="17" r="2" fill="#129aa8"/></svg>
<div class="sep" style="left:568px;top:475px"></div><div class="sep" style="left:739px;top:475px"></div><div class="sep" style="left:870px;top:475px"></div><div class="sep" style="left:920px;top:475px"></div><div class="sep" style="left:1050px;top:475px"></div>
<div class="hl" style="left:357px;top:520px;width:1123px;background:#e6e6e6"></div>
<div class="a" style="left:357.500px;top:521px;width:1092.500px;height:77px;background:#f2f2f2"></div>
<div class="a" style="left:370px;top:534px;width:18px;height:18px;border-radius:50%;background:#00ff00"></div>
<svg style="left:372px;top:568px" width="20" height="14" viewBox="0 0 20 14"><path d="M0.500 0.500L19 6.800L0.500 13L5.500 6.800Z" fill="#000"/></svg>
<svg style="left:400px;top:542px" width="21" height="21" viewBox="0 0 21 21"><defs><linearGradient id="ga" x1="0" x2="1" y1="0" y2="0"><stop offset="0" stop-color="#5a8a00"/><stop offset=".5" stop-color="#b4dc3c"/><stop offset="1" stop-color="#5a8a00"/></linearGradient></defs><path d="M3.500 0.500H8.500V12H11.500L6 19.500L0.500 12H3.500Z" fill="url(#ga)" stroke="#6a9a10" stroke-width=".6"/><text x="12.500" y="6.500" font-size="7" font-weight="bold" fill="#111" font-family="Liberation Sans">01</text><text x="12.500" y="13" font-size="7" font-weight="bold" fill="#111" font-family="Liberation Sans">10</text><text x="12.500" y="19.500" font-size="7" font-weight="bold" fill="#111" font-family="Liberation Sans">01</text></svg>
<div class="t" style="left:425px;top:533.400px;font-size:12.500px;color:#ff1c1c;filter:blur(.35px);letter-spacing:.2px">Плата: 1</div>
<div class="t" style="left:425px;top:554.400px;font-size:12.500px;color:#ff1c1c;filter:blur(.35px);letter-spacing:.4px">Наименование:</div>
<div class="t" style="left:425px;top:575.300px;font-size:12.500px;color:#ff1c1c;filter:blur(.35px);letter-spacing:.4px">Комментарии:</div>
<svg style="left:0;top:0;filter:blur(.4px)" width="1460" height="924" viewBox="0 0 1460 924" font-family="Liberation Sans" fill="#000">
<rect x="745" y="635.45" width="99.750" height="50" fill="#fff" stroke="#000" stroke-width="2.500"/><path d="M745 660.2H844.750" stroke="#000" stroke-width="2.500"/><path d="M846 672.95H1157" stroke="#000" stroke-width="2.500"/>
<text x="748" y="653.0" font-size="12.500" letter-spacing=".3">Nextion Get Attr</text><text x="842.200" y="676.7" font-size="12.500" letter-spacing=".75" text-anchor="end">Value</text><rect x="1157.500" y="660.45" width="81.25" height="25" fill="#fff" stroke="#000" stroke-width="2.500"/><text x="1163" y="678.2" font-size="12.500" letter-spacing=".42">вентилятор</text>
<rect x="745" y="735.45" width="99.750" height="50" fill="#fff" stroke="#000" stroke-width="2.500"/><path d="M745 760.2H844.750" stroke="#000" stroke-width="2.500"/><path d="M846 772.95H1157" stroke="#000" stroke-width="2.500"/>
<text x="748" y="753.0" font-size="12.500" letter-spacing=".3">Nextion Get Attr</text><text x="842.200" y="776.7" font-size="12.500" letter-spacing=".75" text-anchor="end">Value</text><rect x="1157.500" y="760.45" width="82.5" height="25" fill="#fff" stroke="#000" stroke-width="2.500"/><text x="1163" y="777.4" font-size="12.500" letter-spacing=".62">светильник</text>
<rect x="745" y="835.45" width="99.750" height="50" fill="#fff" stroke="#000" stroke-width="2.500"/><path d="M745 860.2H844.750" stroke="#000" stroke-width="2.500"/><path d="M846 872.95H1157" stroke="#000" stroke-width="2.500"/>
<text x="748" y="853.0" font-size="12.500" letter-spacing=".3">Nextion Get Attr</text><text x="842.200" y="876.7" font-size="12.500" letter-spacing=".75" text-anchor="end">Value</text><rect x="1157.500" y="860.45" width="61.0" height="25" fill="#fff" stroke="#000" stroke-width="2.500"/><text x="1163" y="877.4" font-size="12.500" letter-spacing=".5">вентиль</text>
</svg>
<!-- scrollbars -->
<div class="a" style="left:1459px;top:520px;width:21px;height:424px;border:1px solid #e4e4e4;background:#fff"></div>
<div class="thumb" style="left:1462.500px;top:523px;width:12.500px;height:123.500px"></div>
<div class="hl" style="left:357px;top:923px;width:1123px;background:#e4e4e4"></div>
<div class="thumb" style="left:359px;top:927px;width:622px;height:12.500px"></div>
<div class="hl" style="left:355px;top:943px;width:1563px;background:#d9d9d9"></div>
</div>

<!-- ============ LIBRARY PANEL ============ -->
<div id="library">
<div class="a" style="left:1481px;top:470px;width:5px;height:473px;background:#dcdcdc"></div>
<div class="a" style="left:1485.500px;top:470px;width:2.200px;height:473px;background:#111"></div>
<div class="a" style="left:1481px;top:941px;width:6.500px;height:2px;background:#111"></div>
<div class="a" style="left:1491.500px;top:478px;width:143.500px;height:40px;border:2px solid #4a72e6;border-radius:12px"></div>
<div class="t t20" style="left:1505.500px;top:488.55px;letter-spacing:0.381px">Встроенные</div>
<div class="t t20" style="left:1649px;top:488.55px;letter-spacing:0.577px">Пользовательские</div>
<svg class="chev" style="left:1501.200px;top:538.5px" viewBox="0 0 12 14"><path d="M2 1.2L9.3 6.8L2 12.4" fill="none" stroke="#484848" stroke-width="2.4"/></svg><svg style="left:1520px;top:535.7px" width="20" height="21" viewBox="0 0 20 21"><path d="M0.500 1.200Q0.500 0.300 1.400 0.300H8L9.200 1.600H18.900Q19.700 1.600 19.700 2.400V18.300Q19.700 19.100 18.900 19.100H1.300Q0.500 19.100 0.500 18.300Z" fill="#f5efb2" stroke="#98968a" stroke-width="1.100"/><ellipse cx="5" cy="6" rx="1.800" ry="3" fill="none" stroke="#222" stroke-width="1.100"/><path d="M11.200 6.600H17.400M14.300 3.600V9.600" stroke="#111" stroke-width="1.600"/><ellipse cx="4.700" cy="14.800" rx="1.800" ry="3" fill="none" stroke="#222" stroke-width="1.100"/><ellipse cx="10" cy="14.800" rx="1.800" ry="3" fill="none" stroke="#222" stroke-width="1.100"/><path d="M16.700 11.600V18.200" stroke="#222" stroke-width="1.700"/></svg><div class="t t20" style="left:1547.5px;top:535.55px;letter-spacing:0.305px">Операции с битами</div>
<svg class="chev" style="left:1501.200px;top:571.0px" viewBox="0 0 12 14"><path d="M2 1.2L9.3 6.8L2 12.4" fill="none" stroke="#484848" stroke-width="2.4"/></svg><svg style="left:1520px;top:568.2px" width="20" height="21" viewBox="0 0 20 21"><path d="M0.500 3.500Q0.500 2.500 1.400 2.500H18.900Q19.700 2.500 19.700 3.500V19.300Q19.700 20.100 18.900 20.100H1.300Q0.500 20.100 0.500 19.300Z" fill="#f5efb2" stroke="#98968a" stroke-width="1.100"/><path d="M6.200 6.500V4.500Q6.200 2.400 8.200 2.400H12.200Q14.200 2.400 14.200 4.500V6.500" fill="none" stroke="#9a9a9a" stroke-width="1.400"/><rect x="0.500" y="5.800" width="19.200" height="12.600" rx="1.300" fill="#d62222" stroke="#a44" stroke-width=".8"/><rect x="1" y="6.300" width="18.200" height="4.500" rx="1" fill="#ea5a58"/><path d="M0.500 11H19.700" stroke="#9a1414" stroke-width="1"/><path d="M1 14.500H19" stroke="#e84848" stroke-width="1.200" opacity=".6"/><rect x="8.800" y="10.500" width="2.600" height="4.400" fill="#e8e8e8" stroke="#888" stroke-width=".6"/></svg><div class="t t20" style="left:1547.5px;top:568.55px;letter-spacing:0.632px">Другие</div>
<svg class="chev" style="left:1501.200px;top:603.5px" viewBox="0 0 12 14"><path d="M2 1.2L9.3 6.8L2 12.4" fill="none" stroke="#484848" stroke-width="2.4"/></svg><svg style="left:1520px;top:600.7px" width="20" height="21" viewBox="0 0 20 21"><path d="M0.500 1.200Q0.500 0.300 1.400 0.300H8L9.200 1.600H18.900Q19.700 1.600 19.700 2.400V18.300Q19.700 19.100 18.900 19.100H1.300Q0.500 19.100 0.500 18.300Z" fill="#f5efb2" stroke="#98968a" stroke-width="1.100"/><rect x="4.700" y="4" width="12.200" height="15" rx=".8" fill="#3a3a3a"/><path d="M2.600 6.600H4.700M2.600 11.800H4.700M2.600 17H4.700M16.900 6.600H18.600M16.900 11.800H18.600M16.900 17H18.600" stroke="#3a3a3a" stroke-width="2.200"/><rect x="6.600" y="5.300" width="2" height="2" fill="#eee"/></svg><div class="t t20" style="left:1547.5px;top:600.55px;letter-spacing:0.109px">EEPROM</div>
<svg class="chev" style="left:1501.200px;top:636.0px" viewBox="0 0 12 14"><path d="M2 1.2L9.3 6.8L2 12.4" fill="none" stroke="#484848" stroke-width="2.4"/></svg><svg style="left:1520px;top:633.2px" width="20" height="21" viewBox="0 0 20 21"><path d="M0.500 1.200Q0.500 0.300 1.400 0.300H8L9.200 1.600H18.900Q19.700 1.600 19.700 2.400V18.300Q19.700 19.100 18.900 19.100H1.300Q0.500 19.100 0.500 18.300Z" fill="#f5efb2" stroke="#98968a" stroke-width="1.100"/><defs><radialGradient id="gg" cx=".4" cy=".3" r=".8"><stop offset="0" stop-color="#9ad0ff"/><stop offset=".5" stop-color="#3a8eea"/><stop offset="1" stop-color="#1a60c4"/></radialGradient></defs><path d="M1.500 16.700H19" stroke="#222" stroke-width="1.200"/><circle cx="10.300" cy="8.600" r="7.500" fill="url(#gg)"/><path d="M10.300 15.500V17" stroke="#2a4" stroke-width="2"/><circle cx="10.300" cy="16.800" r="1.500" fill="#2ce02c"/></svg><div class="t t20" style="left:1547.5px;top:633.55px;letter-spacing:0.327px">Коммуникации</div>
<svg class="chev" style="left:1501.200px;top:668.5px" viewBox="0 0 12 14"><path d="M2 1.2L9.3 6.8L2 12.4" fill="none" stroke="#484848" stroke-width="2.4"/></svg><svg style="left:1520px;top:665.7px" width="20" height="21" viewBox="0 0 20 21"><path d="M0.500 1.200Q0.500 0.300 1.400 0.300H8L9.200 1.600H18.900Q19.700 1.600 19.700 2.400V18.300Q19.700 19.100 18.900 19.100H1.300Q0.500 19.100 0.500 18.300Z" fill="#f5efb2" stroke="#98968a" stroke-width="1.100"/><rect x="1.200" y="1.800" width="18" height="16.800" rx="3" fill="#2f8fe4"/><path d="M1.200 6.500H19.200M1.200 10.500H19.200M1.200 14.500H19.200M5.500 1.800V18.600M10.200 1.800V18.600M14.900 1.800V18.600" stroke="#d8ecff" stroke-width="1"/><ellipse cx="10.200" cy="10.200" rx="5" ry="8.400" fill="none" stroke="#d8ecff" stroke-width=".9"/><ellipse cx="10.200" cy="10.200" rx="9" ry="8.400" fill="none" stroke="#d8ecff" stroke-width=".9"/></svg><div class="t t20" style="left:1547.5px;top:665.55px;letter-spacing:0.664px">Готовые сервисы</div>
<svg class="chev" style="left:1499.500px;top:703.0px;width:14px;height:12px" viewBox="0 0 14 12"><path d="M1.2 2.5L7 9.5L12.8 2.5" fill="none" stroke="#484848" stroke-width="2.4"/></svg><svg style="left:1520px;top:698.2px" width="20" height="21" viewBox="0 0 20 21"><path d="M0.500 1.200Q0.500 0.300 1.400 0.300H8L9.200 1.600H18.900Q19.700 1.600 19.700 2.400V18.300Q19.700 19.100 18.900 19.100H1.300Q0.500 19.100 0.500 18.300Z" fill="#f5efb2" stroke="#98968a" stroke-width="1.100"/><rect x="1.300" y="1.800" width="17.600" height="16.600" fill="#fdfdf6" stroke="#666" stroke-width="1.100"/><rect x="1.800" y="2.300" width="16.600" height="2.400" fill="#3a7ae0"/><rect x="2.200" y="5.200" width="15.800" height="5" fill="#d4f0fa"/><rect x="3.500" y="5.800" width="2.600" height="2.800" fill="#f4cc3c"/><rect x="2.200" y="9.800" width="15.800" height="2" fill="#f8e08a"/><ellipse cx="13.200" cy="8.200" rx="3" ry="2" fill="#4a9a3a"/><path d="M13.200 9.500V12" stroke="#7a5228" stroke-width="1.200"/><rect x="2.800" y="13.800" width="3.600" height="2.600" fill="#8ab81c"/><rect x="7.800" y="13.800" width="3.600" height="2.600" fill="#48a0e8"/><rect x="12.800" y="13.800" width="3.800" height="2.600" fill="#f47a3c"/></svg><div class="t t20" style="left:1547.5px;top:698.55px;letter-spacing:0.087px">Панель Nextion HMI</div>
<svg class="chev" style="left:1524.500px;top:735.5px;width:14px;height:12px" viewBox="0 0 14 12"><path d="M1.2 2.5L7 9.5L12.8 2.5" fill="none" stroke="#484848" stroke-width="2.4"/></svg><svg style="left:1546.5px;top:731.0px" width="20" height="20" viewBox="0 0 20 20"><rect x="0.400" y="1.200" width="4.800" height="2.800" fill="#1c1ccf"/><path d="M5 2.500H11.500M7.800 2.500V17.200M7.800 9.800H11.500M7.800 17.200H11.500" stroke="#111" stroke-width="1.700" fill="none"/><rect x="11.500" y="0.900" width="6.800" height="3.200" fill="#e8e040" stroke="#333" stroke-width=".8"/><rect x="11.500" y="8.200" width="6.800" height="3.200" fill="#e8e040" stroke="#333" stroke-width=".8"/><rect x="11.500" y="15.600" width="6.800" height="3.200" fill="#e8e040" stroke="#333" stroke-width=".8"/></svg><div class="t t20" style="left:1574.0px;top:730.55px;letter-spacing:0.327px">Элементы</div>
<svg style="left:1573.500px;top:765.300px" width="20" height="20" viewBox="0 0 20 20"><rect x="1.200" y="1" width="16" height="13.500" fill="#fcfcff"/><path d="M1 0.800H17.600V15" stroke="#b4acec" stroke-width="1.100" fill="none"/><path d="M1.300 0.500V14.600H18" stroke="#16165a" stroke-width="2" fill="none"/><path d="M8.200 4L13.200 7.700L8.200 11.400Z" fill="#0c0c3c"/></svg><div class="t t20" style="left:1600.5px;top:763.55px;letter-spacing:0.371px">Задать параметр</div>
<svg style="left:1573.500px;top:797.800px" width="20" height="20" viewBox="0 0 20 20"><rect x="1.200" y="1" width="16" height="13.500" fill="#fcfcff"/><path d="M0.800 0.800V14.800H17.200" stroke="#b4acec" stroke-width="1.100" fill="none"/><path d="M0.300 1.200H17V15.300" stroke="#16165a" stroke-width="2" fill="none"/><path d="M9.800 4L4.800 7.700L9.800 11.400Z" fill="#0c0c3c"/></svg><div class="t t20" style="left:1600.5px;top:795.55px;letter-spacing:0.392px">Получить параметр</div>
<svg class="chev" style="left:1526.500px;top:831.0px" viewBox="0 0 12 14"><path d="M2 1.2L9.3 6.8L2 12.4" fill="none" stroke="#484848" stroke-width="2.4"/></svg><svg style="left:1545.700px;top:828.500px" width="20" height="20" viewBox="0 0 20 20"><rect x="0.800" y="0.800" width="18.500" height="17.500" rx="1.500" fill="#e8f0f8" stroke="#4a98d8" stroke-width="1.400"/><rect x="3" y="3" width="14" height="11.500" fill="#333"/><path d="M3 10H6L7.500 7L9 12L11 4.500L12.500 9L14 8H17" stroke="#f33" stroke-width="1.300" fill="none"/><path d="M3 12H7L8 10.500L10 13L12 11.500H17" stroke="#3d3" stroke-width="1.200" fill="none"/></svg><div class="t t20" style="left:1574.0px;top:828.55px;letter-spacing:0.327px">График</div>
<svg class="chev" style="left:1526.500px;top:863.5px" viewBox="0 0 12 14"><path d="M2 1.2L9.3 6.8L2 12.4" fill="none" stroke="#484848" stroke-width="2.4"/></svg><svg style="left:1545.600px;top:860.500px" width="20" height="20" viewBox="0 0 20 20"><rect x="0.800" y="1" width="18" height="17.500" fill="#f4f6fc" stroke="#8a9ac0" stroke-width="1"/><rect x="0.500" y="0.500" width="18.500" height="2.500" fill="#1c3c7c"/><rect x="0.500" y="17" width="18.500" height="1.800" fill="#3c5c9c"/><path d="M5 3V17" stroke="#7a8ac0" stroke-width="1"/><path d="M1.500 6H4M1.500 8.500H4M1.500 11H4M1.500 13.500H4" stroke="#444" stroke-width="1"/></svg><div class="t t20" style="left:1574.0px;top:860.55px;letter-spacing:0.327px">Страница</div>
<svg class="chev" style="left:1526.500px;top:896.0px" viewBox="0 0 12 14"><path d="M2 1.2L9.3 6.8L2 12.4" fill="none" stroke="#484848" stroke-width="2.4"/></svg><svg style="left:1545.600px;top:893.300px" width="20" height="20" viewBox="0 0 20 20"><path d="M19 1L10.500 11.500" stroke="#f0a030" stroke-width="3" stroke-linecap="round"/><path d="M11 9.500L8 13.500" stroke="#bbb" stroke-width="3.200"/><path d="M8.500 12.500L6 15.500" stroke="#e89030" stroke-width="3.200"/><path d="M6.500 14L0.500 18.500L5 18L8 15.500Z" fill="#7ab020"/></svg><div class="t t20" style="left:1574.0px;top:893.55px;letter-spacing:0.327px">Рисование</div>

<div class="a" style="left:1490px;top:922px;width:383px;height:21px;border:1px solid #e0e0e0;border-bottom:none;background:#fff"></div>
<div class="a" style="left:1872.500px;top:529px;width:21px;height:414px;border:1px solid #e4e4e4;border-bottom:none;background:#fff"></div>
<div class="thumb" style="left:1876px;top:764.500px;width:13px;height:116px"></div>
<div class="a" style="left:1895px;top:472px;width:21px;height:470px;background:#ababab"></div>
<svg style="left:1895px;top:472px" width="21" height="26" viewBox="0 0 21 26"><path d="M5 4.500V15.500L16.500 10Z" fill="#000"/><rect x="5" y="19.800" width="11.500" height="2.600" fill="#000"/></svg>
<div class="t" style="left:1896px;top:848px;width:340px;height:19px;font-size:17.500px;line-height:19px;font-weight:bold;font-style:italic;color:#fff;transform-origin:0 0;transform:rotate(-90deg);letter-spacing:.1px">Библиотека функциональных блоков</div>
</div>

<!-- ============ STATUS ============ -->
<div id="status">
<div class="btn" style="left:360px;top:951px"></div>
<svg style="left:369px;top:961px" width="22" height="16" viewBox="0 0 22 16"><rect x="1.200" y="1.200" width="18.500" height="12.500" rx="1.500" fill="#fff" stroke="#8a44a8" stroke-width="2.200"/><rect x="9" y="4" width="8.500" height="6" fill="#ddd"/><rect x="7" y="3.500" width="2" height="2" fill="#6a2c8a"/><rect x="7" y="6.500" width="2" height="5" fill="#8a44a8"/></svg>
<div class="t t20" style="left:407.500px;top:961.15px;letter-spacing:0.218px">Arduino Uno</div>
<div class="hl" style="left:355px;top:996px;width:1563px;background:#d4d4d4"></div>
<div class="hl" style="left:2px;top:996px;width:353px;background:#ececec"></div>
</div>

<!-- ============ TASKBAR ============ -->
<div id="taskbar">
<div class="a" style="left:0;top:1030px;width:1920px;height:50px;background:#dadada"></div>
<div class="hl" style="left:0;top:1029px;width:1920px;background:#e2e2e2"></div>
<div class="hl" style="left:0;top:1030px;width:1920px;background:#c9c9c9"></div>
<div class="a" style="left:0;top:1031px;width:61px;height:49px;background:#d4d4d4"></div>
<svg style="left:20px;top:1045px" width="20" height="20" viewBox="0 0 20 20"><path d="M0 2.800L8.200 1.700V9.500H0ZM9.200 1.550L20 0V9.500H9.200ZM0 10.500H8.200V18.300L0 17.200ZM9.200 10.500H20V20L9.200 18.450Z" fill="#000"/></svg>
<div class="a" style="left:61px;top:1031px;width:428.500px;height:48px;background:#fff;border-top:1px solid #cfcfcf;border-left:1px solid #c4c4c4"></div>
<div class="hl" style="left:61px;top:1079px;width:428.500px;background:#c8c8c8"></div>
<svg style="left:74px;top:1043px" width="24" height="24" viewBox="0 0 24 24"><circle cx="14.200" cy="8.700" r="6.300" fill="none" stroke="#111" stroke-width="1.400"/><path d="M9.800 13.200L1.500 21.500" stroke="#111" stroke-width="1.500"/></svg>
<div class="t" style="left:110.500px;top:1046.500px;font-size:18px;color:#1c1c1c;letter-spacing:.08px">Введите здесь текст для поиска</div>
<!-- task view -->
<svg style="left:505px;top:1040px" width="30" height="30" viewBox="505 1040 30 30"><path d="M510.300 1045.300V1048.100H522.500V1045.300M510.300 1063.800V1060.700H522.500V1063.800" stroke="#111" stroke-width="1.300" fill="none"/><rect x="510.300" y="1050.400" width="12.200" height="8" fill="none" stroke="#111" stroke-width="1.300"/><path d="M528.400 1045.300V1049.700M528.400 1055V1063.800" stroke="#111" stroke-width="1.300"/><rect x="527" y="1051.200" width="2.800" height="2.600" fill="#111"/></svg>
<!-- explorer -->
<svg style="left:565px;top:1040px" width="40" height="30" viewBox="565 1040 40 30"><defs><linearGradient id="gf" x1="0" y1="0" x2="0" y2="1"><stop offset="0" stop-color="#fdd96a"/><stop offset="1" stop-color="#fbc844"/></linearGradient><linearGradient id="gbl" x1="0" y1="0" x2="0" y2="1"><stop offset="0" stop-color="#4a9ae4"/><stop offset="1" stop-color="#2a84d4"/></linearGradient></defs><path d="M570 1044Q570 1043 571 1043H582.500L584 1044.500V1047H570Z" fill="#e6a408"/><path d="M570 1046.500H583L585 1045H596.400Q597.400 1045 597.400 1046V1063.400Q597.400 1064.400 596.400 1064.400H571Q570 1064.400 570 1063.400Z" fill="url(#gf)"/><path d="M575.200 1065.800V1056.500Q575.200 1055 576.700 1055H591.300Q592.800 1055 592.800 1056.500V1065.800H588.400V1059.400H579.400V1065.800Z" fill="url(#gbl)"/></svg>
<div class="a" style="left:559px;top:1077px;width:51px;height:3px;background:#0a78d4"></div>
<!-- chrome -->
<svg style="left:631px;top:1040px" width="29" height="29" viewBox="-14.500 -14.500 29 29"><circle r="14" fill="#fbc116"/><path d="M0 0L-12.120 -7A14 14 0 0 1 12.120 -7Z" fill="#e33e2b"/><path d="M0 0L-12.120 -7A14 14 0 0 0 0 14L6.060 3.500Z" fill="#2da94f"/><path d="M-12.120 -7A14 14 0 0 1 12.120 -7H0Z" fill="#e33e2b"/><path d="M12.120 -7H0L6.060 3.500L0 14A14 14 0 0 0 12.120 -7Z" fill="#fbc116"/><circle r="6.400" fill="#fff"/><circle r="5.100" fill="#4a8af4"/></svg>
<div class="a" style="left:621px;top:1077px;width:51px;height:3px;background:#0a78d4"></div>
<!-- word -->
<svg style="left:692px;top:1040px" width="31" height="29" viewBox="0 0 31 29"><rect x="8" y="1" width="22" height="27" rx="1.500" fill="#41a5ee"/><rect x="8" y="8" width="22" height="7" fill="#2b7cd3"/><rect x="8" y="15" width="22" height="6.500" fill="#185abd"/><path d="M8 21.500H30V26.500Q30 28 28.500 28H9.500Q8 28 8 26.500Z" fill="#103f91"/><rect x="0.500" y="7" width="16" height="15.500" rx="1.500" fill="#185abd"/><path d="M3.500 10.500L5.700 19L8.500 11.500L11.300 19L13.500 10.500" fill="none" stroke="#fff" stroke-width="1.700"/></svg>
<div class="a" style="left:683px;top:1077px;width:51px;height:3px;background:#0a78d4"></div>
<!-- N -->
<svg style="left:750px;top:1036px" width="40" height="36" viewBox="750 1036 40 36"><path d="M755 1040.200L785 1045.300V1061.400H781.700V1048L758.200 1044V1066H765.600V1068.700H755Z" fill="#08bcf8"/><path d="M760.200 1047.300H770.400V1056.300H773V1047.600H779V1066.800H769V1058H766V1068.700H760.200Z" fill="#08bcf8"/></svg>
<div class="a" style="left:745px;top:1077px;width:51px;height:3px;background:#0a78d4"></div>
<!-- flprog active -->
<div class="a" style="left:802px;top:1031px;width:61px;height:46px;background:#f1f1f1"></div>
<svg style="left:817px;top:1040px;filter:blur(.6px)" width="30" height="30" viewBox="0 0 16 16"><rect width="16" height="16" fill="#c0c0c0"/><rect x="2" y="0" width="3" height="1" fill="#808080"/><rect x="0" y="1" width="2" height="1" fill="#000"/><rect x="2" y="1" width="3" height="1" fill="#808080"/><rect x="5" y="1" width="1" height="1" fill="#000"/><rect x="6" y="1" width="1" height="1" fill="#fff"/><rect x="1" y="2" width="1" height="1" fill="#fff"/><rect x="2" y="2" width="3" height="1" fill="#808080"/><rect x="5" y="2" width="1" height="1" fill="#000"/><rect x="6" y="2" width="1" height="1" fill="#fff"/><rect x="12" y="2" width="3" height="1" fill="#808080"/><rect x="2" y="3" width="3" height="1" fill="#808080"/><rect x="5" y="3" width="7" height="1" fill="#000"/><rect x="12" y="3" width="3" height="1" fill="#808080"/><rect x="15" y="3" width="1" height="1" fill="#000"/><rect x="2" y="4" width="3" height="1" fill="#808080"/><rect x="5" y="4" width="1" height="1" fill="#000"/><rect x="6" y="4" width="6" height="1" fill="#fff"/><rect x="12" y="4" width="3" height="1" fill="#808080"/><rect x="15" y="4" width="1" height="1" fill="#000"/><rect x="0" y="5" width="2" height="1" fill="#000"/><rect x="2" y="5" width="3" height="1" fill="#808080"/><rect x="5" y="5" width="1" height="1" fill="#000"/><rect x="6" y="5" width="1" height="1" fill="#fff"/><rect x="12" y="5" width="3" height="1" fill="#808080"/><rect x="15" y="5" width="1" height="1" fill="#000"/><rect x="1" y="6" width="1" height="1" fill="#fff"/><rect x="3" y="6" width="3" height="1" fill="#000"/><rect x="6" y="6" width="4" height="1" fill="#fff"/><rect x="12" y="6" width="3" height="1" fill="#808080"/><rect x="15" y="6" width="1" height="1" fill="#000"/><rect x="1" y="7" width="6" height="1" fill="#fff"/><rect x="7" y="7" width="2" height="1" fill="#000"/><rect x="9" y="7" width="2" height="1" fill="#fff"/><rect x="12" y="7" width="3" height="1" fill="#808080"/><rect x="15" y="7" width="1" height="1" fill="#000"/><rect x="2" y="8" width="3" height="1" fill="#808080"/><rect x="5" y="8" width="2" height="1" fill="#fff"/><rect x="7" y="8" width="4" height="1" fill="#000"/><rect x="11" y="8" width="2" height="1" fill="#fff"/><rect x="13" y="8" width="3" height="1" fill="#000"/><rect x="0" y="9" width="2" height="1" fill="#000"/><rect x="2" y="9" width="3" height="1" fill="#808080"/><rect x="5" y="9" width="1" height="1" fill="#000"/><rect x="6" y="9" width="2" height="1" fill="#fff"/><rect x="8" y="9" width="2" height="1" fill="#000"/><rect x="10" y="9" width="2" height="1" fill="#ff0"/><rect x="12" y="9" width="1" height="1" fill="#800000"/><rect x="13" y="9" width="3" height="1" fill="#fff"/><rect x="0" y="10" width="2" height="1" fill="#fff"/><rect x="2" y="10" width="3" height="1" fill="#808080"/><rect x="5" y="10" width="1" height="1" fill="#000"/><rect x="6" y="10" width="2" height="1" fill="#fff"/><rect x="8" y="10" width="1" height="1" fill="#000"/><rect x="9" y="10" width="4" height="1" fill="#ff0"/><rect x="13" y="10" width="1" height="1" fill="#800000"/><rect x="2" y="11" width="3" height="1" fill="#808080"/><rect x="5" y="11" width="3" height="1" fill="#000"/><rect x="8" y="11" width="1" height="1" fill="#fff"/><rect x="9" y="11" width="1" height="1" fill="#ff0"/><rect x="10" y="11" width="1" height="1" fill="#fff"/><rect x="11" y="11" width="1" height="1" fill="#ff0"/><rect x="12" y="11" width="1" height="1" fill="#f00"/><rect x="13" y="11" width="1" height="1" fill="#ff0"/><rect x="14" y="11" width="1" height="1" fill="#800000"/><rect x="2" y="12" width="3" height="1" fill="#808080"/><rect x="5" y="12" width="1" height="1" fill="#000"/><rect x="6" y="12" width="3" height="1" fill="#fff"/><rect x="9" y="12" width="1" height="1" fill="#800000"/><rect x="10" y="12" width="1" height="1" fill="#ff0"/><rect x="11" y="12" width="1" height="1" fill="#f00"/><rect x="12" y="12" width="1" height="1" fill="#000"/><rect x="13" y="12" width="1" height="1" fill="#f00"/><rect x="14" y="12" width="1" height="1" fill="#ff0"/><rect x="15" y="12" width="1" height="1" fill="#800000"/><rect x="0" y="13" width="2" height="1" fill="#000"/><rect x="2" y="13" width="3" height="1" fill="#808080"/><rect x="5" y="13" width="1" height="1" fill="#000"/><rect x="6" y="13" width="1" height="1" fill="#fff"/><rect x="10" y="13" width="1" height="1" fill="#800000"/><rect x="11" y="13" width="1" height="1" fill="#ff0"/><rect x="12" y="13" width="1" height="1" fill="#f00"/><rect x="13" y="13" width="1" height="1" fill="#000"/><rect x="14" y="13" width="1" height="1" fill="#f00"/><rect x="15" y="13" width="1" height="1" fill="#ff0"/><rect x="1" y="14" width="1" height="1" fill="#fff"/><rect x="3" y="14" width="3" height="1" fill="#000"/><rect x="6" y="14" width="1" height="1" fill="#fff"/><rect x="11" y="14" width="1" height="1" fill="#800000"/><rect x="12" y="14" width="1" height="1" fill="#ff0"/><rect x="13" y="14" width="1" height="1" fill="#f00"/><rect x="14" y="14" width="1" height="1" fill="#000"/><rect x="15" y="14" width="1" height="1" fill="#f00"/></svg>
<div class="a" style="left:802px;top:1077px;width:61px;height:3px;background:#0a78d4"></div>
<!-- tray -->
<svg style="left:1579px;top:1049px" width="19" height="12" viewBox="0 0 19 12"><path d="M1 10.500L9.500 2L18 10.500" fill="none" stroke="#111" stroke-width="1.300"/></svg>
<svg style="left:1606px;top:1045px" width="24" height="22" viewBox="1606 1045 24 22"><defs><linearGradient id="gc" x1="0" y1="0" x2="1" y2="1"><stop offset="0" stop-color="#7a7a7a"/><stop offset=".55" stop-color="#a8a8a8"/><stop offset="1" stop-color="#e4e4e4"/></linearGradient></defs><path d="M1613 1060.300Q1608.700 1060.300 1608.700 1056.200Q1608.700 1052.800 1612.200 1052.300Q1613.500 1047.800 1618 1047.800Q1621.800 1047.800 1623.300 1051.300Q1627.500 1051.500 1627.500 1055.500Q1627.500 1060.300 1623 1060.300Z" fill="url(#gc)" stroke="#1c1c1c" stroke-width="1.400"/><circle cx="1622.500" cy="1059.700" r="5.300" fill="#fff"/><path d="M1619 1058.800A3.600 3.600 0 0 1 1625.600 1057.700M1626 1060.600A3.600 3.600 0 0 1 1619.400 1061.700" fill="none" stroke="#1a72e0" stroke-width="1.500"/><path d="M1626.600 1055.600V1058.600H1623.600ZM1618.400 1063.800V1060.800H1621.400Z" fill="#1a72e0"/></svg>
<svg style="left:1636px;top:1045px" width="26" height="20" viewBox="1636 1045 26 20"><rect x="1641.900" y="1050.800" width="14.800" height="9.400" fill="none" stroke="#111" stroke-width="1.200"/><rect x="1643.400" y="1052.300" width="11.800" height="6.400" fill="#000"/><rect x="1657.300" y="1053.500" width="1.300" height="4" fill="#111"/><path d="M1639 1048V1050.500M1641.500 1048V1050.500" stroke="#111" stroke-width="1.100"/><path d="M1638 1050.500H1642.500V1052.500Q1642.500 1054 1640.250 1054Q1638 1054 1638 1052.500Z" fill="#dadada" stroke="#111" stroke-width="1.100"/><path d="M1640.250 1054V1060.300H1642" fill="none" stroke="#111" stroke-width="1.100"/></svg>
<svg style="left:1670px;top:1046px" width="18" height="18" viewBox="0 0 18 18"><path d="M1 17A15.500 15.500 0 0 1 16.500 1.500" fill="none" stroke="#1c1c1c" stroke-width="1.400"/><path d="M5 17A11.500 11.500 0 0 1 16.500 5.500" fill="none" stroke="#1c1c1c" stroke-width="1.400"/><path d="M9 17A7.500 7.500 0 0 1 16.500 9.500" fill="none" stroke="#1c1c1c" stroke-width="1.400"/><circle cx="15" cy="15.500" r="1.600" fill="#111"/></svg>
<svg style="left:1697px;top:1046px" width="24" height="18" viewBox="0 0 24 18"><path d="M1.500 6.500H4.500L9 2V16L4.500 11.500H1.500Z" fill="none" stroke="#111" stroke-width="1.200"/><path d="M12 6.500Q13.500 9 12 11.500" fill="none" stroke="#111" stroke-width="1.200"/><path d="M15 4.500Q17.800 9 15 13.500" fill="none" stroke="#333" stroke-width="1.100"/><path d="M18.500 2Q22.500 9 18.500 16" fill="none" stroke="#999" stroke-width="1"/></svg>
<div class="t" style="left:1732.500px;top:1048.500px;font-size:14px;color:#111;letter-spacing:-.8px">РУС</div>
<div class="t" style="left:1794.500px;top:1037px;font-size:13.500px;color:#111">16:06</div>
<div class="t" style="left:1777.500px;top:1059.500px;font-size:13.500px;color:#111">10.08.2020</div>
<svg style="left:1868px;top:1044px" width="22" height="22" viewBox="0 0 22 22"><path d="M1 1H20.500V16.500H12.500L9.500 20V16.500H1Z" fill="#111"/><path d="M4 5H17.500M4 8.500H17.500M4 12H12" stroke="#dadada" stroke-width="1.200"/><circle cx="17" cy="16" r="4.600" fill="#111" stroke="#dadada" stroke-width="1"/><path d="M18.500 13A3.200 3.200 0 1 0 20 17A3 3 0 0 1 18.500 13Z" fill="#dadada"/></svg>
<div class="vl" style="left:1914px;top:1031px;height:49px;background:#b8b8b8"></div>
</div>

</body></html>
